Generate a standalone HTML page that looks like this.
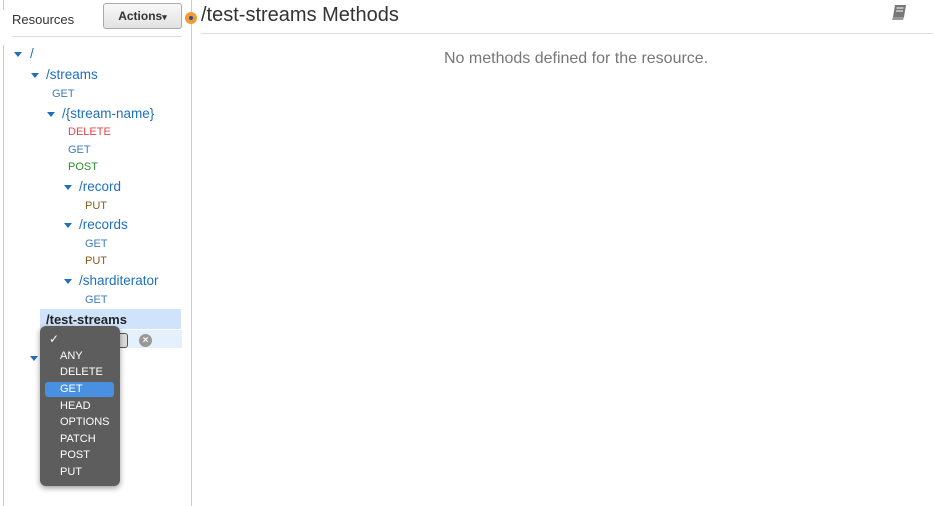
<!DOCTYPE html>
<html><head><meta charset="utf-8">
<style>
*{margin:0;padding:0;box-sizing:border-box}
body{width:934px;height:506px;background:#fff;font-family:"Liberation Sans",Arial,sans-serif;position:relative;overflow:hidden;color:#333}
.a{position:absolute;white-space:nowrap}
.r{font-size:13.5px;color:#1e6fc0}
.m{font-size:11px}
.g{color:#3f7ac0}.d{color:#e0474c}.p{color:#2e8b2e}.u{color:#8a5a1e}
.tri{position:absolute;width:0;height:0;border-left:4px solid transparent;border-right:4px solid transparent;border-top:5px solid #1e6fc0}
.dd div{position:absolute;left:20px;font-size:11px;color:#fff}
</style></head><body>
<div class="a" style="left:3px;top:0;width:1px;height:10px;background:#ccc"></div>
<div class="a" style="left:3px;top:45px;width:1px;height:461px;background:#ccc"></div>
<div class="a" style="left:191px;top:0;width:1px;height:506px;background:#ccc"></div>
<div class="a" style="left:12px;top:12px;font-size:13px;color:#333">Resources</div>
<div class="a" style="left:12px;top:36px;width:170px;height:1px;background:#ddd"></div>
<div class="a" style="left:103px;top:3px;width:79px;height:26px;border:1px solid #aaa;border-radius:3px;background:linear-gradient(#f8f8f8,#e2e2e2);font-size:12px;font-weight:bold;color:#333;text-align:center;line-height:24px">Actions<span style="font-size:9px">▾</span></div>
<div class="a" style="left:185px;top:12px;width:12px;height:12px;border-radius:50%;background:#f29b36"></div>
<div class="a" style="left:189px;top:16px;width:4px;height:4px;border-radius:50%;background:#2a4f8f"></div>
<div class="a" style="left:201px;top:4px;font-size:20px;color:#333">/test-streams Methods</div>
<div class="a" style="left:201px;top:33px;width:732px;height:1px;background:#ddd"></div>
<svg class="a" style="left:890px;top:4px" width="18" height="18" viewBox="0 0 18 18"><path d="M5 1h11l-2 12H3z" fill="#777"/><path d="M3 13h11l-1 3H2z" fill="#999"/><path d="M6.5 4h7M6 7h7" stroke="#fff" stroke-width="1"/></svg>
<div class="a" style="left:444px;top:50px;font-size:16px;color:#777">No methods defined for the resource.</div>

<div class="tri" style="left:14px;top:52px"></div><div class="a r" style="left:30px;top:46px">/</div>
<div class="tri" style="left:31px;top:73px"></div><div class="a r" style="left:46px;top:67px">/streams</div>
<div class="a m g" style="left:52px;top:88px">GET</div>
<div class="tri" style="left:47px;top:112px"></div><div class="a r" style="left:62px;top:106px">/{stream-name}</div>
<div class="a m d" style="left:68px;top:126px">DELETE</div>
<div class="a m g" style="left:68px;top:144px">GET</div>
<div class="a m p" style="left:68px;top:161px">POST</div>
<div class="tri" style="left:64px;top:185px"></div><div class="a r" style="left:79px;top:179px">/record</div>
<div class="a m u" style="left:85px;top:200px">PUT</div>
<div class="tri" style="left:64px;top:223px"></div><div class="a r" style="left:79px;top:217px">/records</div>
<div class="a m g" style="left:85px;top:238px">GET</div>
<div class="a m u" style="left:85px;top:255px">PUT</div>
<div class="tri" style="left:64px;top:279px"></div><div class="a r" style="left:79px;top:273px">/sharditerator</div>
<div class="a m g" style="left:85px;top:294px">GET</div>
<div class="a" style="left:40px;top:309px;width:141px;height:20px;background:#cfe4fb"></div>
<div class="a" style="left:46px;top:312px;font-size:13px;font-weight:bold;color:#222">/test-streams</div>
<div class="a" style="left:40px;top:330px;width:142px;height:18px;background:#e4f0fc"></div>
<div class="a" style="left:112px;top:333px;width:16px;height:15px;border:1px solid #555;border-radius:3px;background:#ddd"></div>
<div class="a" style="left:139px;top:334px;width:13px;height:13px;border-radius:50%;background:#999;color:#fff;font-size:10px;line-height:13px;text-align:center;font-weight:bold">×</div>
<div class="tri" style="left:30px;top:356px"></div>
<div class="a dd" style="left:40px;top:326px;width:80px;height:160px;background:#5d5d5d;border-radius:6px;box-shadow:0 2px 6px rgba(0,0,0,.4)">
<div style="left:9px;top:6px;font-size:12px">✓</div>
<div style="top:24px">ANY</div>
<div style="top:40px">DELETE</div>
<div style="left:5px;top:56px;width:69px;height:15px;background:#4a90e2;border-radius:3px"></div>
<div style="top:57px">GET</div>
<div style="top:74px">HEAD</div>
<div style="top:90px">OPTIONS</div>
<div style="top:107px">PATCH</div>
<div style="top:123px">POST</div>
<div style="top:140px">PUT</div>
</div>
</body></html>
